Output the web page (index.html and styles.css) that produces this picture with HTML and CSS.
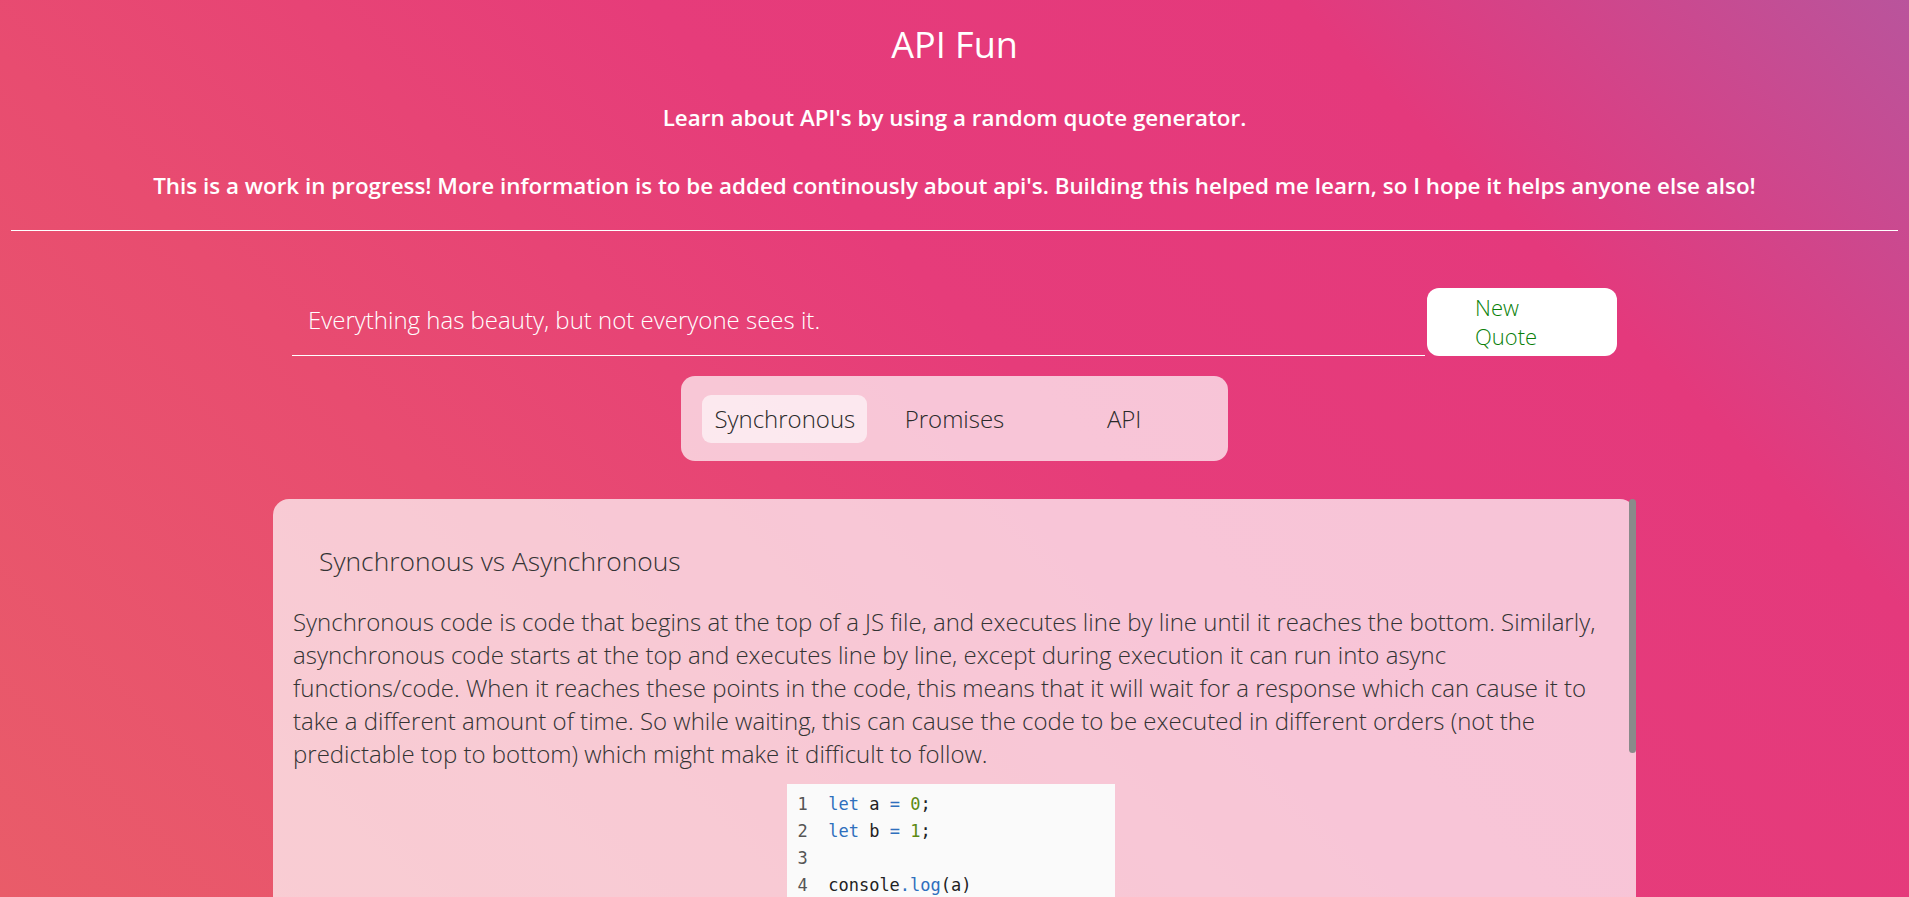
FILE: index.html
```html
<!DOCTYPE html>
<html lang="en">
<head>
<meta charset="utf-8">
<title>API Fun</title>
<link rel="stylesheet" href="styles.css">
</head>
<body>
<header class="header">
  <h1 class="title">API Fun</h1>
  <h3 class="subtitle">Learn about API's by using a random quote generator.</h3>
  <h3 class="subtitle subtitle-2">This is a work in progress! More information is to be added continously about api's. Building this helped me learn, so I hope it helps anyone else also!</h3>
</header>
<hr class="divider">
<main class="main">
  <section class="quote-row">
    <div class="quote-box">Everything has beauty, but not everyone sees it.</div>
    <button class="quote-btn">New Quote</button>
  </section>
  <nav class="tabs">
    <div class="tab-cell"><button class="tab tab-active">Synchronous</button></div>
    <div class="tab-cell"><button class="tab">Promises</button></div>
    <div class="tab-cell"><button class="tab">API</button></div>
  </nav>
  <div class="card-wrap">
    <article class="card">
      <h2 class="card-title">Synchronous vs Asynchronous</h2>
      <p class="card-text">Synchronous code is code that begins at the top of a JS file, and executes line by line until it reaches the bottom. Similarly, asynchronous code starts at the top and executes line by line, except during execution it can run into async functions/code. When it reaches these points in the code, this means that it will wait for a response which can cause it to take a different amount of time. So while waiting, this can cause the code to be executed in different orders (not the predictable top to bottom) which might make it difficult to follow.</p>
      <div class="code-wrap">
        <pre class="code"><span class="ln">1</span>  <span class="kw">let</span> a <span class="op">=</span> <span class="num">0</span>;
<span class="ln">2</span>  <span class="kw">let</span> b <span class="op">=</span> <span class="num">1</span>;
<span class="ln">3</span>
<span class="ln">4</span>  console<span class="op">.</span><span class="kw">log</span>(a)
<span class="ln">5</span>  console<span class="op">.</span><span class="kw">log</span>(b)</pre>
      </div>
      <p class="card-text">In the example above, the code runs in order: the variables are declared first, and then each value is logged to the console one after another. Nothing has to wait, so the output is always predictable.</p>
    </article>
    <div class="scroll-thumb"></div>
  </div>
</main>
</body>
</html>
```
FILE: styles.css
```css
html {
  height: 100%;
  background: linear-gradient(45deg, #e95c69 0%, #e84c70 30%, #e63c7a 55%, #e4397c 78%, #b9549c 100%) fixed;
}

body {
  margin: 0;
  padding: 0 8px;
  height: 100%;
  overflow: hidden;
  font-family: "Open Sans", "Noto Sans", sans-serif;
  color: #fff;
}

.header {
  text-align: center;
  padding-top: 23px;
}

.title {
  margin: 0;
  font-size: 36px;
  line-height: 44px;
  font-weight: 400;
}

.subtitle {
  margin: 35px 0 0;
  font-size: 22.4px;
  line-height: 32px;
  font-weight: 600;
}

.subtitle-2 {
  margin-top: 36px;
}

.divider {
  margin: 28px 3px 0;
  border: none;
  height: 1px;
  background: #fff;
}

.main {
  display: flex;
  flex-direction: column;
  align-items: center;
}

.quote-row {
  margin-top: 57px;
  width: 70%;
  display: flex;
  gap: 2px;
  height: 68px;
}

.quote-box {
  flex: 1;
  display: flex;
  align-items: center;
  padding: 0 0 4px 16px;
  border-bottom: 1px solid #fff;
  font-size: 24px;
  line-height: 32px;
  font-weight: 300;
  color: #fff;
}

.quote-btn {
  width: 190px;
  flex: none;
  padding: 0 48px;
  border: none;
  border-radius: 12px;
  background: #fff;
  color: #0a7f0a;
  font-family: "Open Sans", "Noto Sans", sans-serif;
  font-size: 22px;
  line-height: 29px;
  font-weight: 300;
  text-align: left;
  cursor: pointer;
}

.tabs {
  margin-top: 20px;
  width: 509px;
  padding: 19px 19px 18px;
  display: grid;
  grid-template-columns: repeat(3, 1fr);
  background: rgba(255, 255, 255, 0.7);
  border-radius: 14px;
}

.tab-cell {
  display: flex;
  justify-content: center;
}

.tab {
  height: 48px;
  padding: 0 12px;
  border: none;
  border-radius: 9px;
  background: transparent;
  font-family: "Open Sans", "Noto Sans", sans-serif;
  font-size: 24px;
  line-height: 32px;
  font-weight: 300;
  color: #2a2a2a;
  cursor: pointer;
}

.tab-active {
  background: rgba(255, 255, 255, 0.6);
}

.card-wrap {
  position: relative;
  margin-top: 38px;
  width: 72%;
  flex: none;
}

.card {
  height: 620px;
  box-sizing: border-box;
  padding: 44px 28px 30px 20px;
  background: rgba(255, 255, 255, 0.7);
  border-radius: 16px;
  overflow: hidden;
  color: #333;
}

.scroll-thumb {
  position: absolute;
  top: 0;
  right: 0;
  width: 7px;
  height: 254px;
  background: #8a8a8a;
  border-radius: 4px;
}

.card-title {
  margin: 0 0 0 26px;
  font-size: 26.4px;
  line-height: 36px;
  font-weight: 300;
}

.card-text {
  margin: 26px 0 0;
  font-size: 24px;
  line-height: 33px;
  font-weight: 300;
}

.code-wrap {
  display: flex;
  justify-content: center;
  margin-top: 14px;
}

.code {
  margin: 0 0 0 2px;
  width: 328px;
  box-sizing: border-box;
  padding: 7px 10px 10px;
  background: #fafafa;
  font-family: "DejaVu Sans Mono", "Liberation Mono", monospace;
  font-size: 17px;
  line-height: 27px;
  color: #222;
}

.ln {
  color: #555;
}

.kw {
  color: #2f6fbd;
}

.op {
  color: #2f6fbd;
}

.num {
  color: #5c8a12;
}
```
